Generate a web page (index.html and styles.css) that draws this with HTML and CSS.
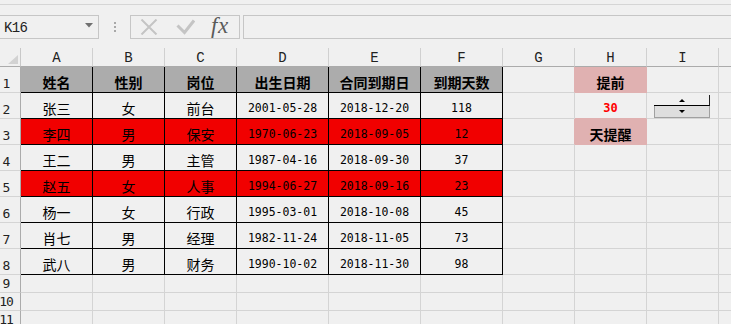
FILE: index.html
```html
<!DOCTYPE html>
<html lang="zh-CN">
<head>
<meta charset="utf-8">
<title>Sheet</title>
<link rel="stylesheet" href="styles.css">
</head>
<body>
<div class="app">
  <div class="topline"></div>
  <div class="fbar">
    <div class="namebox">
      <span class="nb-text">K16</span>
      <svg class="caret" width="8" height="5" viewBox="0 0 8 5"><path d="M0 0H8L4 4.5Z" fill="#707070"/></svg>
    </div>
    <div class="grip"><i></i><i></i><i></i></div>
    <div class="fbtns">
      <svg class="ic-x" width="18" height="16" viewBox="0 0 18 16"><path d="M1.5 0.5L16.5 15.5M16.5 0.5L1.5 15.5" stroke="#c4c4c4" stroke-width="2" fill="none"/></svg>
      <svg class="ic-ok" width="19" height="16" viewBox="0 0 19 16"><polyline points="1.5,6.5 8.5,13.5 18,1.5" stroke="#c4c4c4" stroke-width="3" fill="none"/></svg>
      <span class="fx">fx</span>
    </div>
    <div class="finput"></div>
  </div>

  <div class="sheet">
    <!-- column header row -->
    <div class="corner"><svg width="10" height="9" viewBox="0 0 10 9"><polygon points="10,0 10,9 0,9" fill="#d2d2d2"/></svg></div>
    <div class="ch">A</div><div class="ch">B</div><div class="ch">C</div><div class="ch">D</div><div class="ch">E</div><div class="ch">F</div><div class="ch">G</div><div class="ch">H</div><div class="ch">I</div><div class="ch"></div>

    <!-- row 1 -->
    <div class="rh">1</div>
    <div class="c t hd">姓名</div><div class="c t hd">性别</div><div class="c t hd">岗位</div><div class="c t hd">出生日期</div><div class="c t hd">合同到期日</div><div class="c t hd">到期天数</div>
    <div class="c pke"></div><div class="c pk">提前</div><div class="c"></div><div class="c"></div>

    <!-- row 2 -->
    <div class="rh">2</div>
    <div class="c t">张三</div><div class="c t">女</div><div class="c t">前台</div><div class="c t n">2001-05-28</div><div class="c t n">2018-12-20</div><div class="c t n">118</div>
    <div class="c"></div><div class="c n big pkb">30</div><div class="c"></div><div class="c"></div>

    <!-- row 3 -->
    <div class="rh">3</div>
    <div class="c t r">李四</div><div class="c t r">男</div><div class="c t r">保安</div><div class="c t r n">1970-06-23</div><div class="c t r n">2018-09-05</div><div class="c t r n">12</div>
    <div class="c pke"></div><div class="c pk">天提醒</div><div class="c"></div><div class="c"></div>

    <!-- row 4 -->
    <div class="rh">4</div>
    <div class="c t">王二</div><div class="c t">男</div><div class="c t">主管</div><div class="c t n">1987-04-16</div><div class="c t n">2018-09-30</div><div class="c t n">37</div>
    <div class="c"></div><div class="c"></div><div class="c"></div><div class="c"></div>

    <!-- row 5 -->
    <div class="rh">5</div>
    <div class="c t r">赵五</div><div class="c t r">女</div><div class="c t r">人事</div><div class="c t r n">1994-06-27</div><div class="c t r n">2018-09-16</div><div class="c t r n">23</div>
    <div class="c"></div><div class="c"></div><div class="c"></div><div class="c"></div>

    <!-- row 6 -->
    <div class="rh">6</div>
    <div class="c t">杨一</div><div class="c t">女</div><div class="c t">行政</div><div class="c t n">1995-03-01</div><div class="c t n">2018-10-08</div><div class="c t n">45</div>
    <div class="c"></div><div class="c"></div><div class="c"></div><div class="c"></div>

    <!-- row 7 -->
    <div class="rh">7</div>
    <div class="c t">肖七</div><div class="c t">男</div><div class="c t">经理</div><div class="c t n">1982-11-24</div><div class="c t n">2018-11-05</div><div class="c t n">73</div>
    <div class="c"></div><div class="c"></div><div class="c"></div><div class="c"></div>

    <!-- row 8 -->
    <div class="rh">8</div>
    <div class="c t">武八</div><div class="c t">男</div><div class="c t">财务</div><div class="c t n">1990-10-02</div><div class="c t n">2018-11-30</div><div class="c t n">98</div>
    <div class="c"></div><div class="c"></div><div class="c"></div><div class="c"></div>

    <!-- rows 9-11 -->
    <div class="rh">9</div>
    <div class="c"></div><div class="c"></div><div class="c"></div><div class="c"></div><div class="c"></div><div class="c"></div><div class="c"></div><div class="c"></div><div class="c"></div><div class="c"></div>
    <div class="rh">10</div>
    <div class="c"></div><div class="c"></div><div class="c"></div><div class="c"></div><div class="c"></div><div class="c"></div><div class="c"></div><div class="c"></div><div class="c"></div><div class="c"></div>
    <div class="rh">11</div>
    <div class="c"></div><div class="c"></div><div class="c"></div><div class="c"></div><div class="c"></div><div class="c"></div><div class="c"></div><div class="c"></div><div class="c"></div><div class="c"></div>
  </div>

  <div class="spinner">
    <div class="sp-up"><svg width="6" height="3" viewBox="0 0 6 3"><path d="M0 3L3 0L6 3Z" fill="#000"/></svg></div>
    <div class="sp-down"><svg width="6" height="3" viewBox="0 0 6 3"><path d="M0 0H6L3 3Z" fill="#000"/></svg></div>
  </div>
</div>
</body>
</html>
```

FILE: styles.css
```css
html, body {
  margin: 0;
  padding: 0;
  width: 731px;
  height: 324px;
  overflow: hidden;
  background: #f0f0f0;
}

.app {
  position: relative;
  width: 731px;
  height: 324px;
  overflow: hidden;
  font-family: "Noto Sans CJK SC", "Noto Sans", sans-serif;
  color: #000;
}

.topline {
  margin-top: 4px;
  height: 1px;
  background: #d5d5d5;
}

/* formula bar */
.fbar {
  margin-top: 10px;
  height: 24px;
  display: flex;
  align-items: stretch;
}

.namebox {
  box-sizing: border-box;
  margin-left: -1px;
  width: 100px;
  border: 1px solid #c6c6c6;
  display: flex;
  align-items: center;
  justify-content: space-between;
  padding: 0 5px 0 4px;
}

.nb-text {
  font-family: "Liberation Mono", monospace;
  font-size: 14px;
  letter-spacing: -0.6px;
  color: #222;
  padding-top: 2px;
}

.caret {
  margin-top: -3px;
}

.grip {
  width: 31px;
  display: flex;
  flex-direction: column;
  align-items: center;
  justify-content: center;
  gap: 2px;
}

.grip i {
  display: block;
  width: 2px;
  height: 2px;
  background: #a8a8a8;
}

.fbtns {
  box-sizing: border-box;
  width: 110px;
  border: 1px solid #c6c6c6;
  display: flex;
  align-items: center;
}

.ic-x {
  margin-left: 9px;
}

.ic-ok {
  margin-left: 18px;
}

.fx {
  margin-left: 16px;
  font-family: "Liberation Serif", serif;
  font-style: italic;
  font-size: 23px;
  line-height: 22px;
  color: #5a5a5a;
  letter-spacing: 0.5px;
  margin-top: -2px;
}

.finput {
  flex: 1;
  margin-left: 3px;
  border: 1px solid #c6c6c6;
  border-right: none;
}

/* sheet grid */
.sheet {
  margin-top: 9px;
  display: grid;
  grid-template-columns: 21px 72px 72px 72px 92px 92px 82px 72px 72px 72px 72px;
  grid-template-rows: 19px repeat(8, 26px) repeat(3, 18px);
}

.sheet > div {
  box-sizing: border-box;
  border-right: 1px solid #d4d4d4;
  border-bottom: 1px solid #d4d4d4;
  display: flex;
  justify-content: center;
  overflow: hidden;
  white-space: nowrap;
}

.corner {
  align-items: flex-end;
  justify-content: flex-end !important;
  padding: 0 2px 2px 0;
  border-right-color: #c8c8c8 !important;
  border-bottom-color: #ababab !important;
}

.ch {
  align-items: flex-end;
  padding-bottom: 1px;
  font-family: "Liberation Mono", monospace;
  font-size: 14px;
  line-height: 14px;
  color: #222;
  border-right-color: #d0d0d0 !important;
  border-bottom-color: #ababab !important;
}

.rh {
  align-items: flex-end;
  padding: 0 8px 1px 0;
  font-family: "DejaVu Sans Mono", monospace;
  font-size: 13px;
  line-height: 14px;
  color: #222;
  letter-spacing: -1px;
  border-right-color: #ababab !important;
}

.c {
  align-items: center;
  padding-top: 4px;
  font-size: 14px;
  line-height: 16px;
}

.c.t {
  border-right-color: #000;
  border-bottom-color: #000;
}

.c.hd {
  background: #acacac;
  font-weight: 700;
}

.c.r {
  background: #f10000;
}

.c.n {
  font-family: "DejaVu Sans Mono", monospace;
  font-size: 11.5px;
  letter-spacing: 0;
}

.c.big {
  font-weight: 700;
  font-size: 12px;
  color: #ff0000;
}

.c.pk {
  background: #e0b1b1;
  border-right-color: #e0b1b1;
  border-bottom-color: #e0b1b1;
  font-weight: 700;
}

.c.pke {
  border-right-color: #e0b1b1;
}

.c.pkb {
  border-bottom-color: #e0b1b1;
}

/* spinner control overlay */
.spinner {
  position: absolute;
  left: 654px;
  top: 95px;
  width: 56px;
  display: flex;
  flex-direction: column;
}

.sp-up {
  box-sizing: border-box;
  height: 11px;
  border-right: 1px solid #222;
  border-bottom: 1px solid #000;
  display: flex;
  align-items: center;
  justify-content: center;
  padding-top: 1px;
}

.sp-down {
  box-sizing: border-box;
  height: 12px;
  background: #dedede;
  border: 1px solid #a0a0a0;
  border-top: none;
  display: flex;
  align-items: center;
  justify-content: center;
}
```
